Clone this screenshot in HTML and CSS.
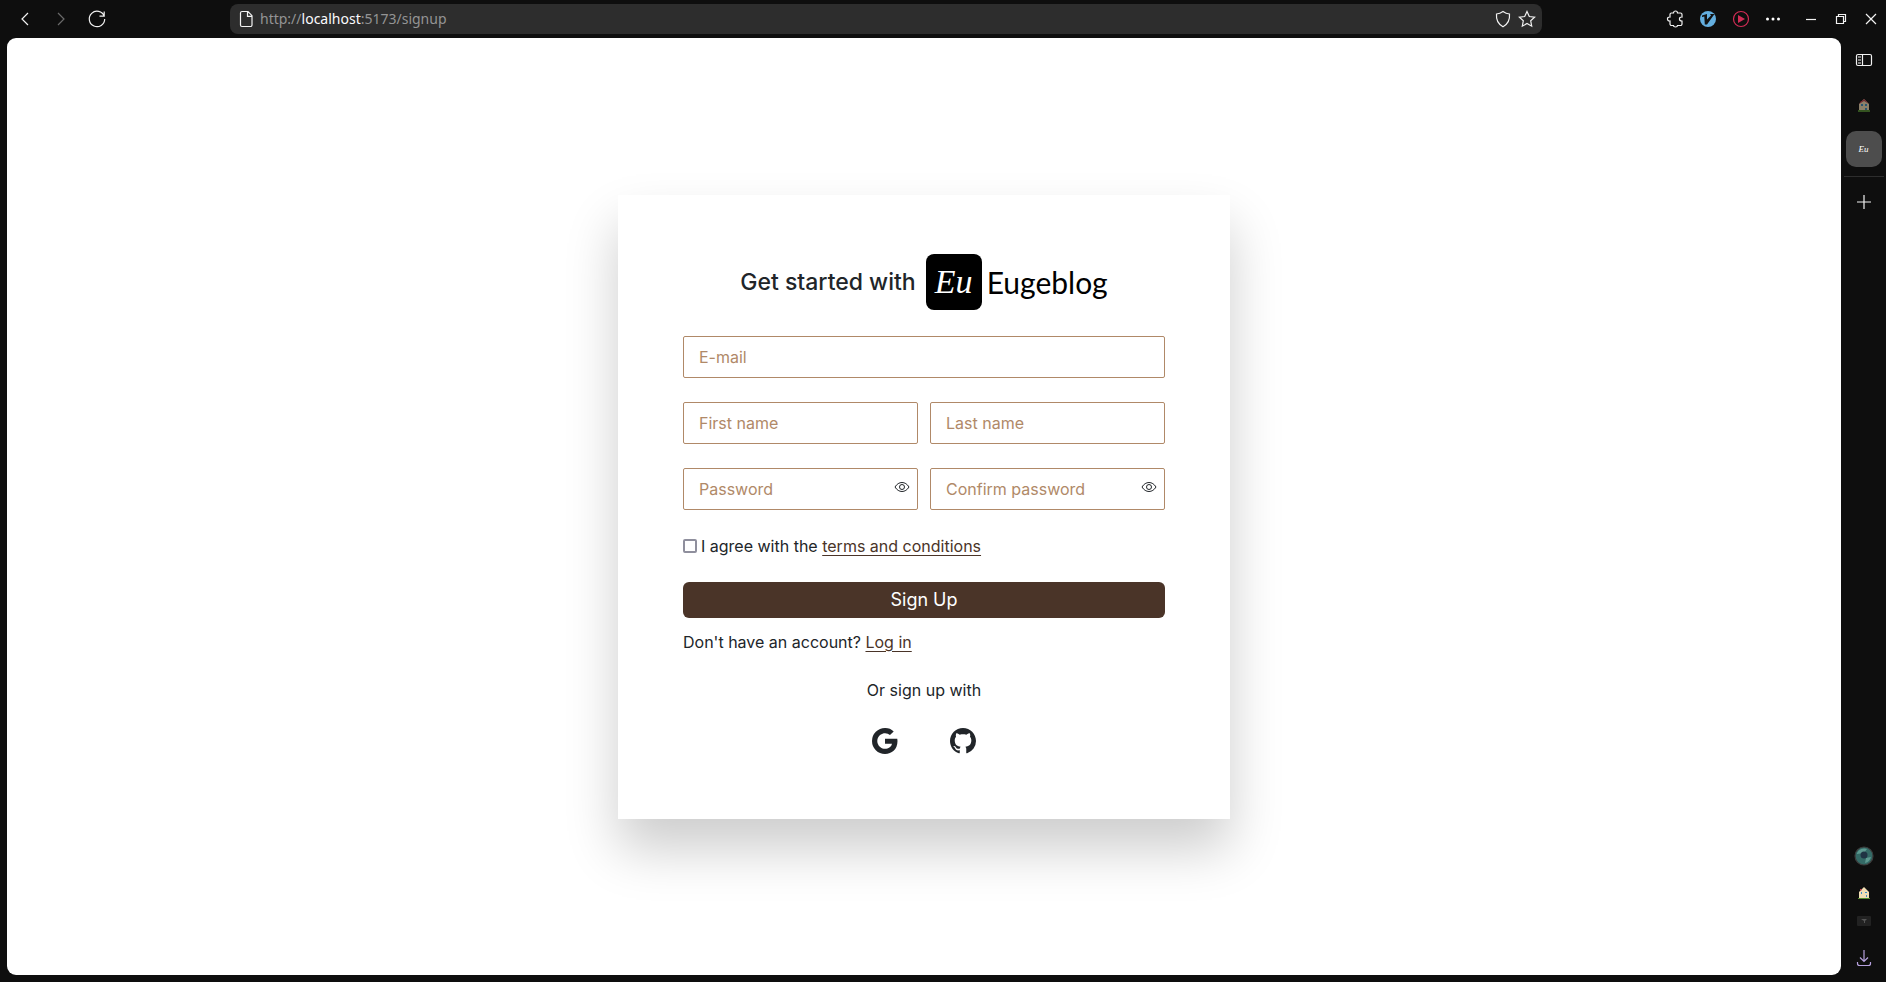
FILE: index.html
```html
<!DOCTYPE html>
<html lang="en">
<head>
<meta charset="utf-8">
<title>Eugeblog</title>
<link rel="stylesheet" href="styles.css">
</head>
<body>
<div class="browser">
  <header class="toolbar">
    <nav class="nav-buttons" aria-label="Navigation">
      <button class="icon-btn" aria-label="Back"><svg width="20" height="20" viewBox="0 0 20 20"><path d="M13 4 7 10l6 6"/></svg></button>
      <button class="icon-btn dim" aria-label="Forward"><svg width="20" height="20" viewBox="0 0 20 20"><path d="m7 4 6 6-6 6"/></svg></button>
      <button class="icon-btn" aria-label="Reload"><svg width="20" height="20" viewBox="0 0 20 20"><path d="M17.200 7.200A7.700 7.700 0 1 0 17.700 10M17.200 2.500v4.700h-4.700"/></svg></button>
    </nav>
    <div class="address">
      <svg width="16" height="18" viewBox="0 0 16 18"><path d="M4 1.500h6l4 4.200v9.300a1.500 1.500 0 0 1-1.500 1.500H4A1.500 1.500 0 0 1 2.500 15V3A1.500 1.500 0 0 1 4 1.500ZM9.500 2v4.300h4.300"/></svg>
      <span class="url">http://<b>localhost</b>:5173/signup</span>
      <button class="icon-btn" aria-label="Protection"><svg width="18" height="18" viewBox="0 0 18 18"><path d="M9 1.500c2 1.500 3.800 2.300 6.500 2.500C16 9.500 14 14 9 16.700 4 14 2 9.500 2.500 4 5.200 3.800 7 3 9 1.500Z"/></svg></button>
      <button class="icon-btn" aria-label="Bookmark"><svg width="18" height="18" viewBox="0 0 18 18"><path d="m9 1.500 2.300 5 5.300.6-3.900 3.700 1 5.400L9 13.500l-4.700 2.700 1-5.400L1.400 7.100l5.300-.6Z"/></svg></button>
    </div>
    <div class="tools">
      <button class="icon-btn" aria-label="Extensions"><svg width="18" height="18" viewBox="0 0 18 18"><path d="M5.500 3h2a2 2 0 0 1 4 0h3a1.500 1.500 0 0 1 1.500 1.500V7c-3.400-.2-3.400 4 0 4v3a1.500 1.500 0 0 1-1.500 1.500h-3c0 2-4 2-4 0h-2A1.500 1.500 0 0 1 4 14v-3c-3.400.3-3.400-4.300 0-4V4.500A1.500 1.500 0 0 1 5.500 3Z"/></svg></button>
      <button class="icon-btn" aria-label="Vimium"><svg width="18" height="18" viewBox="0 0 18 18"><circle class="blue" cx="9" cy="9" r="8"/><path class="ink" d="M3 5.500 8 4v5.500L12 5.500l-1-1.500h4.500L8 14.500H5.800L5.300 6.500 3 7Z"/></svg></button>
      <button class="icon-btn" aria-label="Video"><svg width="18" height="18" viewBox="0 0 18 18"><circle class="red-ring" cx="9" cy="9" r="7.500"/><path class="red" d="m6 5 7 4-7 4Z"/></svg></button>
      <button class="icon-btn" aria-label="More"><svg width="16" height="16" viewBox="0 0 16 16"><g class="dots"><circle cx="2.500" cy="8" r="1.500"/><circle cx="8" cy="8" r="1.500"/><circle cx="13.500" cy="8" r="1.500"/></g></svg></button>
    </div>
    <div class="window-buttons">
      <button class="icon-btn" aria-label="Minimize"><svg width="12" height="12" viewBox="0 0 12 12"><path d="M1 6.500h10"/></svg></button>
      <button class="icon-btn" aria-label="Restore"><svg width="12" height="12" viewBox="0 0 12 12"><path d="M1.500 3.500h7v7h-7ZM3.500 3V1.500h7v7H9"/></svg></button>
      <button class="icon-btn" aria-label="Close"><svg width="12" height="12" viewBox="0 0 12 12"><path d="m1 1 10 10M11 1 1 11"/></svg></button>
    </div>
  </header>

  <div class="workspace">
    <main class="page">
      <section class="card">
        <h1 class="title"><span>Get started with</span>
          <span class="brand"><span class="brand-mark">Eu</span><span class="brand-name">Eugeblog</span></span>
        </h1>
        <form class="form">
          <input class="field wide" type="email" placeholder="E-mail" aria-label="E-mail">
          <input class="field" type="text" placeholder="First name" aria-label="First name">
          <input class="field" type="text" placeholder="Last name" aria-label="Last name">
          <div class="secret">
            <input class="field" type="password" placeholder="Password" aria-label="Password">
            <button class="eye" type="button" aria-label="Show password"><svg width="16" height="16" viewBox="0 0 16 16"><path d="M1 8c3.500-6 10.500-6 14 0-3.500 6-10.500 6-14 0Z"/><circle cx="8" cy="8" r="2.500"/></svg></button>
          </div>
          <div class="secret">
            <input class="field" type="password" placeholder="Confirm password" aria-label="Confirm password">
            <button class="eye" type="button" aria-label="Show password"><svg width="16" height="16" viewBox="0 0 16 16"><path d="M1 8c3.500-6 10.500-6 14 0-3.500 6-10.500 6-14 0Z"/><circle cx="8" cy="8" r="2.500"/></svg></button>
          </div>
          <div class="agree wide">
            <input class="check" type="checkbox" id="agree">
            <label for="agree">I agree with the <a class="link" href="#terms">terms and conditions</a></label>
          </div>
          <button class="submit wide" type="submit">Sign Up</button>
        </form>
        <p class="account">Don't have an account? <a class="link" href="#login">Log in</a></p>
        <p class="or">Or sign up with</p>
        <div class="social">
          <a href="#google" aria-label="Google"><svg width="26" height="26" viewBox="0 0 16 16"><path d="M15.545 6.558a9.420 9.420 0 0 1 .139 1.626c0 2.434-.870 4.492-2.384 5.885h.002C11.978 15.292 10.158 16 8 16A8 8 0 1 1 8 0a7.689 7.689 0 0 1 5.352 2.082l-2.284 2.284A4.347 4.347 0 0 0 8 3.166c-2.087 0-3.860 1.408-4.492 3.304a4.792 4.792 0 0 0 0 3.063h.003c.635 1.893 2.405 3.301 4.492 3.301 1.078 0 2.004-.276 2.722-.764h-.003a3.702 3.702 0 0 0 1.599-2.431H8v-3.080h7.545z"/></svg></a>
          <a href="#github" aria-label="GitHub"><svg width="26" height="26" viewBox="0 0 16 16"><path d="M8 0C3.580 0 0 3.580 0 8c0 3.540 2.290 6.530 5.470 7.590.4.070.550-.170.550-.380 0-.190-.010-.820-.010-1.490-2.010.370-2.530-.490-2.690-.940-.090-.230-.480-.940-.820-1.130-.280-.150-.680-.520-.010-.530.630-.010 1.080.580 1.230.820.720 1.210 1.870.870 2.330.660.070-.520.280-.870.510-1.070-1.780-.2-3.640-.890-3.640-3.950 0-.870.310-1.590.820-2.150-.080-.2-.360-1.020.080-2.120 0 0 .670-.210 2.200.820.640-.180 1.320-.270 2-.270s1.360.090 2 .270c1.530-1.040 2.200-.820 2.200-.820.440 1.100.160 1.920.080 2.120.510.560.820 1.270.820 2.150 0 3.070-1.870 3.750-3.650 3.950.290.250.540.730.540 1.480 0 1.070-.010 1.930-.010 2.200 0 .210.150.460.550.380A8.010 8.010 0 0 0 16 8c0-4.420-3.580-8-8-8"/></svg></a>
        </div>
      </section>
    </main>

    <aside class="sidebar">
      <button class="icon-btn panel" aria-label="Sidebar"><svg width="18" height="14" viewBox="0 0 18 14"><rect x="1.500" y="1.500" width="15" height="11" rx="1.500"/><path d="M7.500 1.500v11M3 4h3M3 7h3M3 10h3"/></svg></button>
      <button class="tab" aria-label="Home tab"><svg class="faded" width="14" height="14" viewBox="0 0 14 14"><path class="wall" d="M2 13V6l5-5 5 5v7Z"/><path class="roof" d="M2 6 4 3l1 0 2-2 5 5-5-3Z"/><path class="pane" d="M4 6h2v2H4Zm4 0h2v2H8Zm0 4h2v2H8Z"/><path class="grass" d="M1 12h12v2H1Z"/></svg></button>
      <button class="tab active" aria-label="Eugeblog tab">Eu</button>
      <hr class="rule">
      <button class="icon-btn tab" aria-label="New tab"><svg width="16" height="16" viewBox="0 0 16 16"><path d="M8 1v14M1 8h14"/></svg></button>
      <div class="dock">
        <button class="icon-btn profile" aria-label="Profile"><svg width="20" height="20" viewBox="0 0 20 20"><circle class="orb" cx="10" cy="10" r="9"/><path class="orb-light" d="M3 7a8 8 0 0 1 10-4l-3 4-7 1Zm9 5 5-1a8 8 0 0 1-6 6Z"/><circle class="orb-core" cx="10" cy="9" r="3.500"/></svg></button>
        <button class="icon-btn" aria-label="Home"><svg width="12" height="12" viewBox="0 0 12 12"><path class="wall" d="M1 11V5l5-5 5 5v6Z"/><path class="roof" d="M2 4V2h1l1 1Z"/><path class="pane" d="M3 5h1v2H3Zm4 0h2v1H7Zm1 3h1v2H8Z"/><path class="grass" d="M0 11h12v1H0Z"/></svg></button>
        <button class="icon-btn" aria-label="Workspace"><svg width="14" height="10" viewBox="0 0 14 10"><rect class="chip" width="14" height="10" rx="1"/><path class="chip-mark" d="M4 3h6L8 5v2H7V5Z"/></svg></button>
        <button class="icon-btn download" aria-label="Downloads"><svg width="16" height="18" viewBox="0 0 16 18"><path d="M8 1v11M4 8.500 8 12.500l4-4M1.500 13v1.500a2 2 0 0 0 2 2h9a2 2 0 0 0 2-2V13"/></svg></button>
      </div>
    </aside>
  </div>
</div>
</body>
</html>
```

FILE: styles.css
```css
* { box-sizing: border-box; }

body {
  margin: 0;
  background: #0e0e0e;
  color: #212529;
  font-family: Inter, sans-serif;
  font-size: 16px;
  line-height: 24px;
}

button, input { font: inherit; }
h1, p { margin: 0; }
svg { display: block; }

.browser {
  display: flex;
  flex-direction: column;
  min-height: 100vh;
}

.toolbar {
  display: flex;
  align-items: center;
  height: 38px;
  padding: 0 9px 0 15px;
}

.icon-btn {
  display: flex;
  align-items: center;
  justify-content: center;
  padding: 0;
  border: 0;
  background: none;
}

.toolbar svg, .sidebar svg {
  fill: none;
  stroke: #f2f2f2;
  stroke-width: 1.2;
}

.nav-buttons { display: flex; gap: 16px; width: 215px; }
.nav-buttons .dim { opacity: .4; }

.address {
  display: flex;
  align-items: center;
  gap: 6px;
  width: 1312px;
  height: 30px;
  padding: 0 6px 0 8px;
  border-radius: 8px;
  background: #2d2d2d;
}

.url {
  flex: 1;
  color: #949494;
  font-family: "Noto Sans", sans-serif;
  font-size: 14px;
}
.url b { color: #fbfbfe; font-weight: 400; }

.tools { display: flex; gap: 15px; margin-left: auto; }
.window-buttons { display: flex; gap: 18px; margin-left: 24px; }

.toolbar .blue { fill: #63aedf; stroke: none; }
.toolbar .ink { fill: #111; stroke: none; }
.toolbar .red-ring { stroke: #d22c55; }
.toolbar .red { fill: #d22c55; stroke: none; }
.toolbar .dots { fill: #fff; stroke: none; }

.workspace { display: flex; flex: 1; }

.page {
  display: flex;
  flex: 1;
  align-items: center;
  justify-content: center;
  margin: 0 0 7px 7px;
  border-radius: 9px;
  background: #fff;
}

.card {
  width: 612px;
  padding: 59px 65px 65px;
  background: #fff;
  box-shadow: 0 30px 50px rgba(0, 0, 0, .2);
}

.title {
  display: flex;
  align-items: center;
  justify-content: center;
  gap: 10px;
  margin-bottom: 26px;
  font-size: 23px;
  font-weight: 500;
}

.brand { display: flex; align-items: center; gap: 5px; color: #000; }

.brand-mark {
  display: grid;
  place-items: center;
  width: 56px;
  height: 56px;
  border-radius: 8px;
  background: #000;
  color: #fff;
  font: italic 34px "Liberation Serif", serif;
}

.brand-name { font: 400 30px Lato, sans-serif; }

.form {
  display: grid;
  grid-template-columns: 1fr 1fr;
  gap: 24px 12px;
}
.wide { grid-column: 1 / -1; }

.field {
  width: 100%;
  height: 42px;
  padding: 0 15px;
  border: 1px solid #b08968;
  border-radius: 2px;
  background: #fff;
  color: #212529;
}
.field::placeholder { color: #b08968; opacity: 1; }

.secret { position: relative; }

.eye {
  position: absolute;
  top: 11px;
  right: 8px;
  padding: 0;
  border: 0;
  background: none;
}
.eye svg { fill: none; stroke: #212529; }

.agree { display: flex; align-items: center; gap: 4px; }

.check {
  width: 14px;
  height: 14px;
  margin: 0;
  border: 2px solid #8f8f9d;
  border-radius: 2px;
  appearance: none;
  background: #fff;
}
.check:checked { background: #4a3428; }

.link { color: #4a3428; text-underline-offset: 3px; text-decoration-thickness: 1px; }

.submit {
  height: 36px;
  padding: 0;
  border: 0;
  border-radius: 6px;
  background: #4a3428;
  color: #fff;
  font-size: 18px;
}

.account { margin-top: 12px; }
.or { margin-top: 24px; text-align: center; }

.social {
  display: flex;
  justify-content: center;
  gap: 52px;
  margin-top: 26px;
}
.social a { color: #212529; }
.social svg { fill: currentColor; }

.sidebar {
  display: flex;
  flex-direction: column;
  align-items: center;
  width: 45px;
  padding-bottom: 15px;
}

.panel { height: 44px; }

.tab {
  display: flex;
  align-items: center;
  justify-content: center;
  width: 36px;
  height: 36px;
  margin-top: 5px;
  padding: 0;
  border: 0;
  border-radius: 10px;
  background: none;
}

.tab.active {
  margin-top: 8px;
  background: #4d4d4d;
  color: #fff;
  font: italic 9px "Liberation Serif", serif;
}

.faded { opacity: .55; }
.rule { width: 40px; height: 1px; margin: 9px 0 2px; border: 0; background: #2d2d2d; }

.sidebar .wall { fill: #f1deb4; stroke: none; }
.sidebar .roof { fill: #c83e4a; stroke: none; }
.sidebar .pane { fill: #3f8fc4; stroke: none; }
.sidebar .grass { fill: #548c2f; stroke: none; }

.dock {
  display: flex;
  flex-direction: column;
  align-items: center;
  gap: 17px;
  margin-top: auto;
}
.profile { margin-bottom: 4px; }
.download { margin-top: 6px; }
.dock .orb { fill: #346a66; stroke: #3d3d3d; }
.dock .orb-light { fill: #5d9990; stroke: none; }
.dock .orb-core { fill: #203444; stroke: none; }
.dock .chip { fill: #222; stroke: none; }
.dock .chip-mark { fill: #555; stroke: none; }
.dock .download svg { stroke: #b6a1de; }
```
